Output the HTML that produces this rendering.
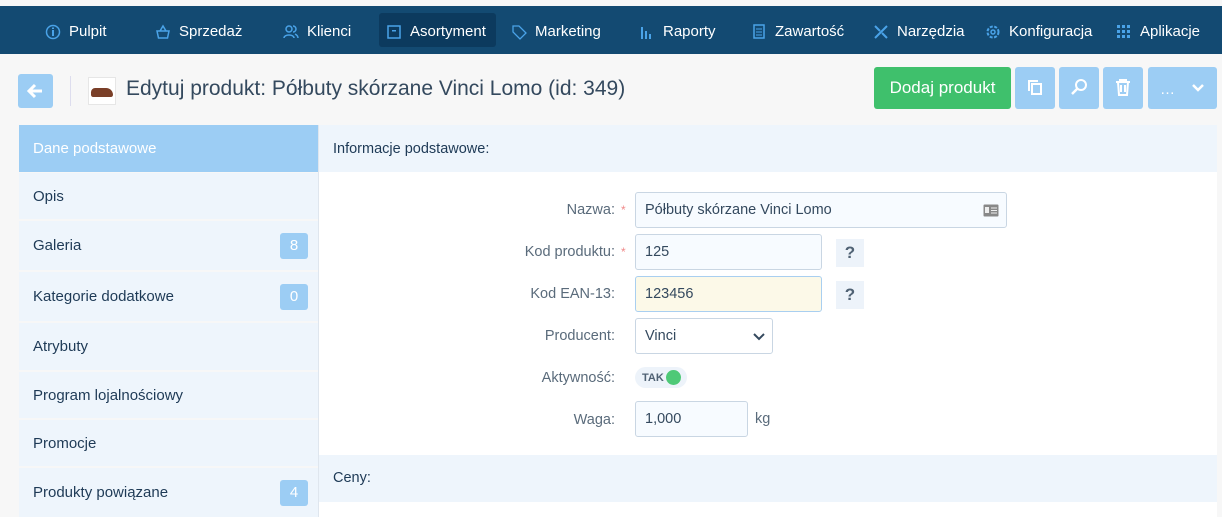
<!DOCTYPE html>
<html><head><meta charset="utf-8"><style>
*{box-sizing:border-box;margin:0;padding:0}
body{width:1222px;height:517px;overflow:hidden;background:#f7f7f7;font-family:"Liberation Sans",sans-serif;position:relative;color:#34495e}
.nav{position:absolute;top:6px;left:0;width:1222px;height:48px;background:#134a72}
.ni{position:absolute;top:9px;height:34px;line-height:34px;color:#fff;font-size:15px;padding:0 0 0 0}
.ni svg{position:absolute;left:-24px;top:9px}
.act{position:absolute;left:379px;top:7px;width:117px;height:34px;background:#0c3a5e;border-radius:3px}
.a{position:absolute}
.side{position:absolute;left:19px;width:299px;background:#eef5fc;font-size:15px;color:#1e3a56;padding-left:14px;display:flex;align-items:center}
.badge{position:absolute;right:10px;width:28px;height:26px;background:#9ccdf4;color:#fff;border-radius:3px;text-align:center;line-height:26px;font-size:15px}
.lbl{position:absolute;right:607px;font-size:14.5px;color:#5a6b7b;text-align:right}
.inp{position:absolute;left:635px;height:36px;border:1px solid #c9d6e3;border-radius:3px;background:#f7fbff;font-size:14.5px;color:#34495e;padding-left:9px;line-height:34px}
.req{color:#f08a8a;font-size:12px;position:absolute;left:621px}
.q{position:absolute;left:836px;width:28px;height:28px;background:#edf3fa;font-weight:bold;font-size:17px;color:#506274;text-align:center;line-height:28px}
.btn{position:absolute;top:67px;height:42px;background:#9ccdf4;border-radius:3px}
</style></head><body>
<div class="nav">
<div class="act"></div>
<div class="ni" style="left:69px">Pulpit<svg width="16" height="16"><circle cx="8" cy="8" r="6.5" fill="none" stroke="#4aa3e8" stroke-width="1.5"/><rect x="7" y="6" width="2" height="6" fill="#4aa3e8"/><rect x="7" y="3.5" width="2" height="1.5" fill="#4aa3e8"/></svg></div>
<div class="ni" style="left:179px">Sprzedaż<svg width="16" height="16"><path d="M2 7h12l-1.5 7h-9z M5 7l3-5 3 5" fill="none" stroke="#4aa3e8" stroke-width="1.5"/></svg></div>
<div class="ni" style="left:307px">Klienci<svg width="16" height="16"><circle cx="6" cy="5" r="3" fill="none" stroke="#4aa3e8" stroke-width="1.5"/><path d="M1 14c0-4 10-4 10 0M10 2a3 3 0 0 1 0 6M12 10c2 1 3 2 3 4" fill="none" stroke="#4aa3e8" stroke-width="1.5"/></svg></div>
<div class="ni" style="left:410px">Asortyment<svg width="16" height="16"><rect x="2" y="2" width="12" height="12" fill="none" stroke="#4aa3e8" stroke-width="1.5"/><rect x="6" y="6" width="4" height="1.5" fill="#4aa3e8"/></svg></div>
<div class="ni" style="left:535px">Marketing<svg width="16" height="16"><path d="M2 2h6l7 7-6 6-7-7z" fill="none" stroke="#4aa3e8" stroke-width="1.3"/></svg></div>
<div class="ni" style="left:663px">Raporty<svg width="16" height="16"><rect x="2" y="3" width="2" height="12" fill="#4aa3e8"/><rect x="6" y="7" width="2" height="8" fill="#4aa3e8"/><rect x="10" y="10" width="2" height="5" fill="#4aa3e8"/></svg></div>
<div class="ni" style="left:775px">Zawartość<svg width="16" height="16"><rect x="3" y="1" width="10" height="13" fill="none" stroke="#4aa3e8" stroke-width="1.5"/><path d="M5 5h6M5 8h6M5 11h6" stroke="#4aa3e8"/></svg></div>
<div class="ni" style="left:897px">Narzędzia<svg width="16" height="16"><path d="M2 14L14 2M2 2l5 5M9 9l5 5" stroke="#4aa3e8" stroke-width="2"/></svg></div>
<div class="ni" style="left:1009px">Konfiguracja<svg width="16" height="16"><circle cx="8" cy="8" r="5.5" fill="none" stroke="#4aa3e8" stroke-width="2" stroke-dasharray="3 1.5"/><circle cx="8" cy="8" r="2" fill="none" stroke="#4aa3e8" stroke-width="1.5"/></svg></div>
<div class="ni" style="left:1140px">Aplikacje<svg width="16" height="16" fill="#4aa3e8"><rect x="1" y="1" width="3" height="3"/><rect x="6" y="1" width="3" height="3"/><rect x="11" y="1" width="3" height="3"/><rect x="1" y="6" width="3" height="3"/><rect x="6" y="6" width="3" height="3"/><rect x="11" y="6" width="3" height="3"/><rect x="1" y="11" width="3" height="3"/><rect x="6" y="11" width="3" height="3"/><rect x="11" y="11" width="3" height="3"/></svg></div>
</div>
<div class="a" style="left:18px;top:74px;width:35px;height:34px;background:#9ccdf4;border-radius:3px"><svg width="35" height="34"><path d="M11 17h13M17 11l-6 6 6 6" fill="none" stroke="#fff" stroke-width="3"/></svg></div>
<div class="a" style="left:70px;top:76px;width:1px;height:30px;background:#dde"></div>
<div class="a" style="left:88px;top:77px;width:28px;height:28px;background:#fff;border:1px solid #e6e6e6"><div style="margin:10px 2px 0;height:9px;background:#7a3f28;border-radius:6px 10px 3px 3px"></div></div>
<div class="a" style="left:126px;top:77px;font-size:21px;color:#34495e">Edytuj produkt: Półbuty skórzane Vinci Lomo (id: 349)</div>
<div class="a" style="left:874px;top:67px;width:137px;height:42px;background:#3fc06c;border-radius:3px;color:#fff;font-size:17px;text-align:center;line-height:42px">Dodaj produkt</div>
<div class="btn" style="left:1015px;width:40px"><svg width="40" height="42"><rect x="17" y="17" width="9" height="10" fill="none" stroke="#fff" stroke-width="2"/><path d="M14 24v-10h9" fill="none" stroke="#fff" stroke-width="2"/></svg></div>
<div class="btn" style="left:1059px;width:40px"><svg width="40" height="42"><circle cx="22" cy="18" r="5" fill="none" stroke="#fff" stroke-width="2"/><path d="M18 22l-5 5" stroke="#fff" stroke-width="2.5"/></svg></div>
<div class="btn" style="left:1103px;width:40px"><svg width="40" height="42"><path d="M13 15h14M17 15v-2h6v2M15 15l1 13h8l1-13M18 18v7M22 18v7" fill="none" stroke="#fff" stroke-width="2"/></svg></div>
<div class="btn" style="left:1148px;width:69px;color:#fff;font-size:15px;line-height:46px;padding-left:12px">…<svg width="20" height="42" style="position:absolute;left:40px;top:0"><path d="M5 18l5 5 5-5" fill="none" stroke="#fff" stroke-width="2.5"/></svg></div>

<div class="a" style="left:319px;top:125px;width:898px;height:392px;background:#fff"></div>
<div class="a" style="left:319px;top:125px;width:898px;height:47px;background:#eef5fc;font-size:14.5px;color:#1e3a56;padding:16px 0 0 14px">Informacje podstawowe:</div>
<div class="a" style="left:319px;top:455px;width:898px;height:47px;background:#eef5fc;font-size:14.5px;color:#1e3a56;padding:15px 0 0 14px">Ceny:</div>
<div class="a" style="left:318px;top:125px;width:1px;height:392px;background:#dfe6ee"></div>

<div class="side" style="top:125px;height:47px;background:#9ccdf4;color:#fff">Dane podstawowe</div>
<div class="side" style="top:173px;height:46px">Opis</div>
<div class="side" style="top:221px;height:49px">Galeria<span class="badge">8</span></div>
<div class="side" style="top:272px;height:49px">Kategorie dodatkowe<span class="badge">0</span></div>
<div class="side" style="top:323px;height:47px">Atrybuty</div>
<div class="side" style="top:372px;height:46px">Program lojalnościowy</div>
<div class="side" style="top:420px;height:46px">Promocje</div>
<div class="side" style="top:468px;height:49px">Produkty powiązane<span class="badge">4</span></div>

<div class="lbl" style="top:202px">Nazwa:</div><span class="req" style="top:203px">*</span>
<div class="inp" style="top:192px;width:372px">Półbuty skórzane Vinci Lomo<svg width="16" height="13" style="position:absolute;right:7px;top:11px"><rect x="0.5" y="0.5" width="15" height="12" rx="1" fill="#888"/><rect x="2" y="3" width="4" height="6" fill="#eee"/><path d="M8 4h6M8 6.5h6M8 9h6" stroke="#eee"/></svg></div>
<div class="lbl" style="top:244px">Kod produktu:</div><span class="req" style="top:245px">*</span>
<div class="inp" style="top:234px;width:187px">125</div>
<div class="q" style="top:239px">?</div>
<div class="lbl" style="top:286px">Kod EAN-13:</div>
<div class="inp" style="top:276px;width:187px;background:#fcf9e8;border-color:#a9cff0">123456</div>
<div class="q" style="top:281px">?</div>
<div class="lbl" style="top:328px">Producent:</div>
<div class="inp" style="top:318px;width:138px;background:#fff">Vinci<svg width="14" height="10" style="position:absolute;right:6px;top:13px"><path d="M2 2l5 5 5-5" fill="none" stroke="#34495e" stroke-width="2"/></svg></div>
<div class="lbl" style="top:370px">Aktywność:</div>
<div class="a" style="left:635px;top:367px;width:52px;height:21px;background:#edf3fa;border-radius:11px;font-size:11px;font-weight:bold;color:#506274;padding:5px 0 0 7px">TAK<span style="position:absolute;left:31px;top:3px;width:15px;height:15px;border-radius:50%;background:#4ec977"></span></div>
<div class="lbl" style="top:412px">Waga:</div>
<div class="inp" style="top:401px;width:113px">1,000</div>
<div class="a" style="left:755px;top:411px;font-size:14.5px;color:#5a6b7b">kg</div>
</body></html>
